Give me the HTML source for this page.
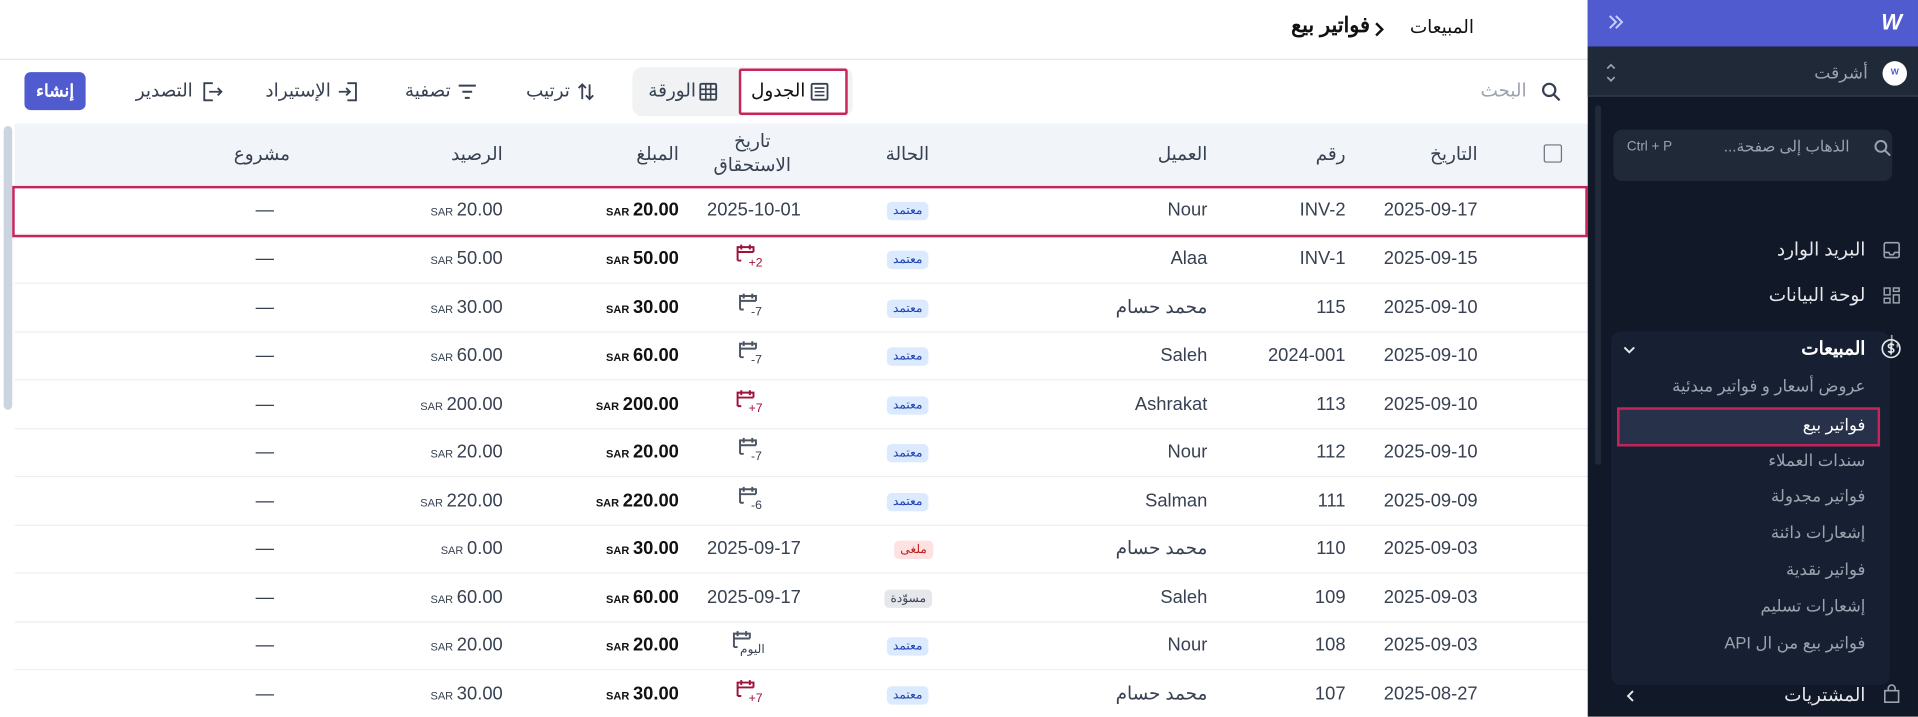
<!DOCTYPE html>
<html><head><meta charset="utf-8">
<style>
*{box-sizing:border-box;margin:0;padding:0}
body{width:1918px;height:717px;overflow:hidden;background:#fff;font-family:"Liberation Sans","Noto Sans CJK SC",sans-serif;color:#1f2937;position:relative}
.wrap{position:absolute;left:0;top:0;width:1568px;height:586px;transform:scale(1.22321);transform-origin:0 0;overflow:hidden}
.a{position:absolute;white-space:nowrap}
.main{position:absolute;left:0;top:0;width:1298px;height:586px;background:#fff}
.hdr{position:absolute;left:0;top:0;width:1298px;height:49px;border-bottom:1px solid #e5e7eb}
.thead{position:absolute;left:12px;top:101px;width:1286px;height:51px;background:#f1f4f9}
.th{font-size:15px;color:#374151}
.row{position:absolute;left:12px;width:1286px;height:40px;border-bottom:1px solid #eceef2}
.c{position:absolute;top:0;line-height:39px;font-size:15px;color:#374151;white-space:nowrap}
.amt{font-weight:bold;color:#111;font-size:15px}
.sar{font-size:9px;font-weight:bold;color:#111;margin-right:3px}
.sar2{font-size:9px;color:#374151;margin-right:3px}
.bd{display:inline-block;font-size:10px;line-height:15px;padding:0 5px;border-radius:4px;background:#dbeafe;color:#1e40af;vertical-align:middle}
.bd.r{background:#fee2e2;color:#b91c1c}
.bd.g{background:#e5e7eb;color:#374151}
.cal{position:absolute;top:6px;width:30px;height:28px}
.cal span{position:absolute;left:12px;top:13px;font-size:10px;line-height:10px;unicode-bidi:isolate;direction:ltr}
.side{position:absolute;left:1298px;top:0;width:270px;height:586px;background:#111827}
.si{position:absolute;font-size:15px;color:#e5e7eb;white-space:nowrap;direction:rtl}
.sub{position:absolute;right:43px;font-size:13.5px;color:#9ca3af;white-space:nowrap;direction:rtl}
</style></head><body>
<div class="wrap">
<div class="main">
 <div class="hdr">
  <div class="a" style="right:93px;top:13px;font-size:15px;color:#111">المبيعات</div>
  <svg class="a" style="left:1122px;top:17px" width="10" height="14" viewBox="0 0 10 14"><path d="M3 2l5 5-5 5" stroke="#111" stroke-width="2" fill="none"/></svg>
  <div class="a" style="right:178px;top:11px;font-size:17px;font-weight:bold;color:#111">فواتير بيع</div>
 </div>
 <svg class="a" style="left:1259px;top:66px" width="18" height="18" viewBox="0 0 18 18"><circle cx="7.5" cy="7.5" r="5" stroke="#374151" stroke-width="1.8" fill="none"/><path d="M11 11l5 5" stroke="#374151" stroke-width="1.8"/></svg>
 <div class="a" style="right:50px;top:65px;font-size:15px;color:#9ca3af">البحث</div>
 <div class="a" style="left:517px;top:55px;width:180px;height:40px;background:#f1f2f4;border-radius:8px"></div>
 <div class="a" style="left:604px;top:56px;width:89px;height:38px;background:#fff;border:2px solid #c7245a;border-radius:2px"></div>
 <div class="a" style="left:614px;top:65px;font-size:15px;color:#111">الجدول</div>
 <svg class="a" style="left:662px;top:67px" width="16" height="16" viewBox="0 0 16 16"><rect x="1.5" y="1.5" width="13" height="13" rx="1" stroke="#374151" stroke-width="1.5" fill="none"/><path d="M4 5h8M4 8h8M4 11h8" stroke="#374151" stroke-width="1.3"/></svg>
 <div class="a" style="left:530px;top:65px;font-size:15px;color:#374151">الورقة</div>
 <svg class="a" style="left:571px;top:67px" width="16" height="16" viewBox="0 0 16 16"><rect x="1.5" y="1.5" width="13" height="13" rx="1" stroke="#374151" stroke-width="1.5" fill="none"/><path d="M1.5 6h13M1.5 10h13M6 1.5v13M10 1.5v13" stroke="#374151" stroke-width="1.3"/></svg>
 <div class="a" style="left:430px;top:65px;font-size:15px;color:#374151">ترتيب</div>
 <svg class="a" style="left:471px;top:66px" width="16" height="18" viewBox="0 0 16 18"><path d="M5 15V3M2 6l3-3 3 3M11 3v12M8 12l3 3 3-3" stroke="#374151" stroke-width="1.5" fill="none"/></svg>
 <div class="a" style="left:331px;top:65px;font-size:15px;color:#374151">تصفية</div>
 <svg class="a" style="left:374px;top:68px" width="16" height="14" viewBox="0 0 16 14"><path d="M1 2h14M4 7h8M6 12h4" stroke="#374151" stroke-width="1.6"/></svg>
 <div class="a" style="left:217px;top:65px;font-size:15px;color:#374151">الإستيراد</div>
 <svg class="a" style="left:276px;top:66px" width="18" height="18" viewBox="0 0 18 18"><path d="M8 2h7v14H8M1 9h9M7 6l3 3-3 3" stroke="#374151" stroke-width="1.5" fill="none"/></svg>
 <div class="a" style="left:111px;top:65px;font-size:15px;color:#374151">التصدير</div>
 <svg class="a" style="left:164px;top:66px" width="18" height="18" viewBox="0 0 18 18"><path d="M10 2H3v14h7M7 9h10M14 6l3 3-3 3" stroke="#374151" stroke-width="1.5" fill="none"/></svg>
 <div class="a" style="left:20px;top:59px;width:50px;height:31px;background:#505bd0;border-radius:5px;color:#fff;font-size:14px;font-weight:bold;text-align:center;line-height:31px">إنشاء</div>
 <div class="a" style="left:3px;top:103px;width:7px;height:232px;background:#cbd5e1;border-radius:4px"></div>
 <div class="thead">
  <div class="a" style="left:1250px;top:17px;width:15px;height:15px;border:1.5px solid #6b7280;border-radius:2px"></div>
  <div class="a th" style="right:90px;top:16px">التاريخ</div>
  <div class="a th" style="right:198px;top:16px">رقم</div>
  <div class="a th" style="right:311px;top:16px">العميل</div>
  <div class="a th" style="left:712px;top:16px">الحالة</div>
  <div class="a th" style="left:570px;top:5px;width:66px;text-align:center;line-height:20px;white-space:normal">تاريخ الاستحقاق</div>
  <div class="a th" style="right:743px;top:16px">المبلغ</div>
  <div class="a th" style="right:887px;top:16px">الرصيد</div>
  <div class="a th" style="right:1061px;top:16px">مشروع</div>
 </div>

 <div class="row" style="top:152px"><div class="c" style="right:90px">2025-09-17</div><div class="c" style="right:198px">INV-2</div><div class="c" style="right:311px">Nour</div><div class="c" style="left:713px"><span class="bd">معتمد</span></div><div class="c" style="left:566px">2025-10-01</div><div class="c" style="right:743px"><span class="sar">SAR</span><span class="amt">20.00</span></div><div class="c" style="right:887px"><span class="sar2">SAR</span>20.00</div><div class="c" style="left:197px">—</div></div>
 <div class="row" style="top:192px"><div class="c" style="right:90px">2025-09-15</div><div class="c" style="right:198px">INV-1</div><div class="c" style="right:311px">Alaa</div><div class="c" style="left:713px"><span class="bd">معتمد</span></div><div class="cal" style="left:588px;color:#9f1239"><svg width="18" height="18" viewBox="0 0 18 18"><path d="M3 15V4h13v4M3 8h13M6 2v4M13 2v4M3 15h3" stroke="#9f1239" stroke-width="1.6" fill="none"/></svg><span>+2</span></div><div class="c" style="right:743px"><span class="sar">SAR</span><span class="amt">50.00</span></div><div class="c" style="right:887px"><span class="sar2">SAR</span>50.00</div><div class="c" style="left:197px">—</div></div>
 <div class="row" style="top:232px"><div class="c" style="right:90px">2025-09-10</div><div class="c" style="right:198px">115</div><div class="c" style="right:311px">محمد حسام</div><div class="c" style="left:713px"><span class="bd">معتمد</span></div><div class="cal" style="left:590px;color:#374151"><svg width="18" height="18" viewBox="0 0 18 18"><path d="M3 15V4h13v4M3 8h13M6 2v4M13 2v4M3 15h3" stroke="#4b5563" stroke-width="1.6" fill="none"/></svg><span>-7</span></div><div class="c" style="right:743px"><span class="sar">SAR</span><span class="amt">30.00</span></div><div class="c" style="right:887px"><span class="sar2">SAR</span>30.00</div><div class="c" style="left:197px">—</div></div>
 <div class="row" style="top:271px"><div class="c" style="right:90px">2025-09-10</div><div class="c" style="right:198px">2024-001</div><div class="c" style="right:311px">Saleh</div><div class="c" style="left:713px"><span class="bd">معتمد</span></div><div class="cal" style="left:590px;color:#374151"><svg width="18" height="18" viewBox="0 0 18 18"><path d="M3 15V4h13v4M3 8h13M6 2v4M13 2v4M3 15h3" stroke="#4b5563" stroke-width="1.6" fill="none"/></svg><span>-7</span></div><div class="c" style="right:743px"><span class="sar">SAR</span><span class="amt">60.00</span></div><div class="c" style="right:887px"><span class="sar2">SAR</span>60.00</div><div class="c" style="left:197px">—</div></div>
 <div class="row" style="top:311px"><div class="c" style="right:90px">2025-09-10</div><div class="c" style="right:198px">113</div><div class="c" style="right:311px">Ashrakat</div><div class="c" style="left:713px"><span class="bd">معتمد</span></div><div class="cal" style="left:588px;color:#9f1239"><svg width="18" height="18" viewBox="0 0 18 18"><path d="M3 15V4h13v4M3 8h13M6 2v4M13 2v4M3 15h3" stroke="#9f1239" stroke-width="1.6" fill="none"/></svg><span>+7</span></div><div class="c" style="right:743px"><span class="sar">SAR</span><span class="amt">200.00</span></div><div class="c" style="right:887px"><span class="sar2">SAR</span>200.00</div><div class="c" style="left:197px">—</div></div>
 <div class="row" style="top:350px"><div class="c" style="right:90px">2025-09-10</div><div class="c" style="right:198px">112</div><div class="c" style="right:311px">Nour</div><div class="c" style="left:713px"><span class="bd">معتمد</span></div><div class="cal" style="left:590px;color:#374151"><svg width="18" height="18" viewBox="0 0 18 18"><path d="M3 15V4h13v4M3 8h13M6 2v4M13 2v4M3 15h3" stroke="#4b5563" stroke-width="1.6" fill="none"/></svg><span>-7</span></div><div class="c" style="right:743px"><span class="sar">SAR</span><span class="amt">20.00</span></div><div class="c" style="right:887px"><span class="sar2">SAR</span>20.00</div><div class="c" style="left:197px">—</div></div>
 <div class="row" style="top:390px"><div class="c" style="right:90px">2025-09-09</div><div class="c" style="right:198px">111</div><div class="c" style="right:311px">Salman</div><div class="c" style="left:713px"><span class="bd">معتمد</span></div><div class="cal" style="left:590px;color:#374151"><svg width="18" height="18" viewBox="0 0 18 18"><path d="M3 15V4h13v4M3 8h13M6 2v4M13 2v4M3 15h3" stroke="#4b5563" stroke-width="1.6" fill="none"/></svg><span>-6</span></div><div class="c" style="right:743px"><span class="sar">SAR</span><span class="amt">220.00</span></div><div class="c" style="right:887px"><span class="sar2">SAR</span>220.00</div><div class="c" style="left:197px">—</div></div>
 <div class="row" style="top:429px"><div class="c" style="right:90px">2025-09-03</div><div class="c" style="right:198px">110</div><div class="c" style="right:311px">محمد حسام</div><div class="c" style="left:719px"><span class="bd r">ملغى</span></div><div class="c" style="left:566px">2025-09-17</div><div class="c" style="right:743px"><span class="sar">SAR</span><span class="amt">30.00</span></div><div class="c" style="right:887px"><span class="sar2">SAR</span>0.00</div><div class="c" style="left:197px">—</div></div>
 <div class="row" style="top:469px"><div class="c" style="right:90px">2025-09-03</div><div class="c" style="right:198px">109</div><div class="c" style="right:311px">Saleh</div><div class="c" style="left:711px"><span class="bd g">مسوّدة</span></div><div class="c" style="left:566px">2025-09-17</div><div class="c" style="right:743px"><span class="sar">SAR</span><span class="amt">60.00</span></div><div class="c" style="right:887px"><span class="sar2">SAR</span>60.00</div><div class="c" style="left:197px">—</div></div>
 <div class="row" style="top:508px"><div class="c" style="right:90px">2025-09-03</div><div class="c" style="right:198px">108</div><div class="c" style="right:311px">Nour</div><div class="c" style="left:713px"><span class="bd">معتمد</span></div><div class="cal" style="left:585px;color:#374151"><svg width="18" height="18" viewBox="0 0 18 18"><path d="M3 15V4h13v4M3 8h13M6 2v4M13 2v4M3 15h3" stroke="#4b5563" stroke-width="1.6" fill="none"/></svg><span style="left:8px;direction:rtl">اليوم</span></div><div class="c" style="right:743px"><span class="sar">SAR</span><span class="amt">20.00</span></div><div class="c" style="right:887px"><span class="sar2">SAR</span>20.00</div><div class="c" style="left:197px">—</div></div>
 <div class="row" style="top:548px"><div class="c" style="right:90px">2025-08-27</div><div class="c" style="right:198px">107</div><div class="c" style="right:311px">محمد حسام</div><div class="c" style="left:713px"><span class="bd">معتمد</span></div><div class="cal" style="left:588px;color:#9f1239"><svg width="18" height="18" viewBox="0 0 18 18"><path d="M3 15V4h13v4M3 8h13M6 2v4M13 2v4M3 15h3" stroke="#9f1239" stroke-width="1.6" fill="none"/></svg><span>+7</span></div><div class="c" style="right:743px"><span class="sar">SAR</span><span class="amt">30.00</span></div><div class="c" style="right:887px"><span class="sar2">SAR</span>30.00</div><div class="c" style="left:197px">—</div></div>
 <div class="a" style="left:10px;top:152px;width:1288px;height:42px;border:2px solid #c7245a"></div>
</div>

<div class="side">
 <div class="a" style="left:0;top:0;width:270px;height:38px;background:#505bd0"></div>
 <svg class="a" style="left:16px;top:11px" width="14" height="14" viewBox="0 0 14 14"><path d="M2 2l5 5-5 5M7 2l5 5-5 5" stroke="#c7d2fe" stroke-width="1.6" fill="none"/></svg>
 <div class="a" style="left:240px;top:8px;font-size:18px;font-weight:bold;color:#fff;font-style:italic">W</div>
 <div class="a" style="left:0;top:38px;width:270px;height:41px;background:#1f2937;border-bottom:1px solid #374151"></div>
 <div class="a" style="left:241px;top:50px;width:20px;height:20px;border-radius:50%;background:#fff;font-size:7px;color:#505bd0;text-align:center;line-height:20px;font-weight:bold">W</div>
 <div class="si" style="right:41px;top:51px;font-size:14px;color:#9ca3af">أشرقت</div>
 <svg class="a" style="left:14px;top:51px" width="10" height="17" viewBox="0 0 10 17"><path d="M2 5l3-3 3 3M2 12l3 3 3-3" stroke="#9ca3af" stroke-width="1.4" fill="none"/></svg>
 <div class="a" style="left:6px;top:86px;width:5px;height:294px;background:#1f2937;border-radius:3px"></div>
 <div class="a" style="left:21px;top:106px;width:228px;height:42px;background:#1f2937;border-radius:7px"></div>
 <div class="a" style="left:32px;top:114px;font-size:11px;color:#9ca3af">Ctrl + P</div>
 <div class="si" style="right:56px;top:112px;font-size:12.5px;color:#9ca3af">الذهاب إلى صفحة...</div>
 <svg class="a" style="left:233px;top:113px" width="16" height="16" viewBox="0 0 18 18"><circle cx="7.5" cy="7.5" r="5" stroke="#9ca3af" stroke-width="1.8" fill="none"/><path d="M11 11l5 5" stroke="#9ca3af" stroke-width="1.8"/></svg>
 <div class="si" style="right:43px;top:195px">البريد الوارد</div>
 <svg class="a" style="left:241px;top:197px" width="15" height="15" viewBox="0 0 16 16"><rect x="1.5" y="1.5" width="13" height="13" rx="1.5" stroke="#9ca3af" stroke-width="1.4" fill="none"/><path d="M1.5 10h4l1 2h3l1-2h4" stroke="#9ca3af" stroke-width="1.4" fill="none"/></svg>
 <div class="si" style="right:43px;top:232px">لوحة البيانات</div>
 <svg class="a" style="left:241px;top:234px" width="15" height="15" viewBox="0 0 16 16"><path d="M1.5 1.5h5v6h-5zM9.5 1.5h5v3h-5zM9.5 7.5h5v7h-5zM1.5 10.5h5v4h-5z" stroke="#9ca3af" stroke-width="1.3" fill="none"/></svg>
 <div class="si" style="right:43px;top:269px">التقارير</div>
 <svg class="a" style="left:241px;top:271px" width="15" height="15" viewBox="0 0 16 16"><path d="M3 14V9M8 14V3M13 14v-3" stroke="#9ca3af" stroke-width="1.5"/></svg>
 <div class="a" style="left:19px;top:271px;width:228px;height:289px;background:#172033;border-radius:8px"></div>
 <div class="si" style="right:43px;top:276px;font-weight:bold;color:#fff">المبيعات</div>
 <svg class="a" style="left:239px;top:276px" width="18" height="18" viewBox="0 0 20 20"><circle cx="10" cy="10" r="8" stroke="#e5e7eb" stroke-width="1.5" fill="none"/><path d="M12.5 7c-1-1.5-5-1.5-5 .8s5 1.2 5 3.8c0 2.2-4 2.2-5 .6M10 4.5v11" stroke="#e5e7eb" stroke-width="1.4" fill="none"/></svg>
 <svg class="a" style="left:28px;top:281px" width="12" height="10" viewBox="0 0 12 10"><path d="M2 3l4 4 4-4" stroke="#e5e7eb" stroke-width="1.6" fill="none"/></svg>
 <div class="sub" style="top:308px">عروض أسعار و فواتير مبدئية</div>
 <div class="a" style="left:24px;top:333px;width:215px;height:32px;background:#27324a;border:2px solid #c7245a"></div>
 <div class="sub" style="top:340px;color:#fff">فواتير بيع</div>
 <div class="sub" style="top:369px">سندات العملاء</div>
 <div class="sub" style="top:398px">فواتير مجدولة</div>
 <div class="sub" style="top:428px">إشعارات دائنة</div>
 <div class="sub" style="top:458px">فواتير نقدية</div>
 <div class="sub" style="top:488px">إشعارات تسليم</div>
 <div class="sub" style="top:518px">فواتير بيع من ال API</div>
 <div class="si" style="right:43px;top:559px">المشتريات</div>
 <svg class="a" style="left:241px;top:559px" width="15" height="17" viewBox="0 0 16 18"><path d="M2 6h12v10H2zM5 6V4a3 3 0 016 0v2" stroke="#9ca3af" stroke-width="1.4" fill="none"/></svg>
 <svg class="a" style="left:30px;top:563px" width="10" height="12" viewBox="0 0 10 12"><path d="M7 2L3 6l4 4" stroke="#e5e7eb" stroke-width="1.6" fill="none"/></svg>
</div>
</div>
</body></html>
